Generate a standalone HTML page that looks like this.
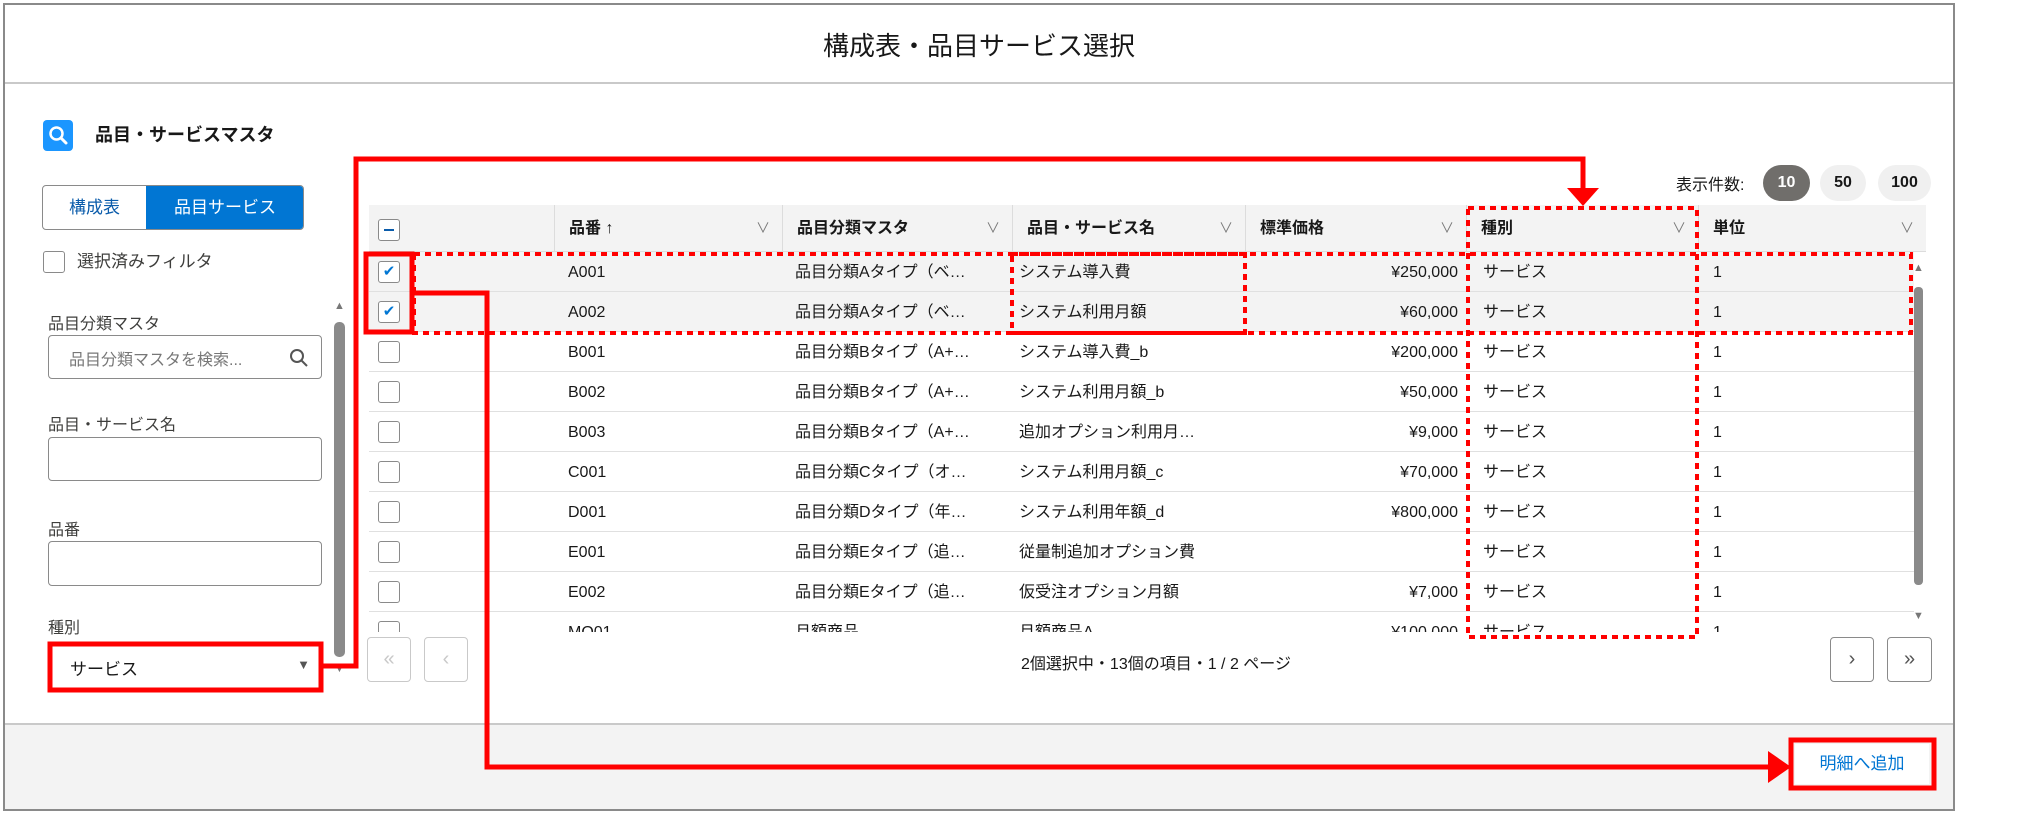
<!DOCTYPE html>
<html><head><meta charset="utf-8"><style>
*{box-sizing:border-box;margin:0;padding:0}
body{width:2027px;height:814px;background:#fff;font-family:"Liberation Sans","Noto Sans CJK JP",sans-serif;color:#181818;position:relative;overflow:hidden}
.a{position:absolute}
.frame{left:3px;top:3px;width:1952px;height:808px;border:2px solid #8a8a8a;background:#fff}
.title{left:3px;width:1952px;top:26px;text-align:center;font-size:26px}
.hline{left:5px;width:1948px;height:2px;background:#c9c9c9}
.footer{left:5px;top:723px;width:1948px;height:86px;background:#f3f3f3;border-top:2px solid #c9c9c9}
.lbl{font-size:16px;color:#3e3e3c}
.inp{border:1px solid #8a8a8a;border-radius:4px;background:#fff}
.th{top:205px;height:47px;font-size:16px;font-weight:bold;line-height:47px;padding-left:14px;border-left:1px solid #dcdcdc}
.chev{position:absolute;right:12px;top:0;color:#777;font-weight:normal;font-size:14px}
.row{position:absolute;left:0;width:1545px;height:40px;border-bottom:1px solid #e0e0e0;font-size:16px;line-height:42px}
.row span{position:absolute;white-space:nowrap}
.cb{position:absolute;width:22px;height:22px;border:1px solid #8a8a8a;border-radius:3px;background:#fff}
.pb{border:1px solid #c9c9c9;border-radius:4px;background:#fff;text-align:center;line-height:42px;font-size:20px;color:#c9c9c9}
.pb2{border-color:#8a8a8a;color:#555}
.pill{top:165px;height:36px;border-radius:18px;background:#f0f0f0;text-align:center;line-height:36px;font-size:16px;font-weight:bold}
</style></head><body>
<div class="a frame"></div>
<div class="a title">構成表・品目サービス選択</div>
<div class="a hline" style="top:82px"></div>
<div class="a footer"></div>

<div class="a" style="left:43px;top:120px;width:30px;height:31px;background:#1b96ff;border-radius:4px">
<svg width="30" height="31" viewBox="0 0 30 31"><circle cx="13.5" cy="13.5" r="6" fill="none" stroke="#fff" stroke-width="2.5"/><path d="M18 18 L23 23" stroke="#fff" stroke-width="3" stroke-linecap="round"/></svg></div>
<div class="a" style="left:95px;top:122px;font-size:18px;font-weight:bold;line-height:26px">品目・サービスマスタ</div>

<div class="a" style="left:42px;top:185px;width:262px;height:45px;border:1px solid #8a8a8a;border-radius:4px;overflow:hidden">
<div class="a" style="left:0;top:0;width:103px;height:43px;line-height:43px;text-align:center;color:#0b5cab;font-size:17px">構成表</div>
<div class="a" style="left:103px;top:0;width:158px;height:43px;line-height:43px;text-align:center;background:#0176d3;color:#fff;font-size:17px">品目サービス</div></div>
<div class="a" style="left:43px;top:251px;width:22px;height:22px;border:1px solid #8a8a8a;border-radius:3px"></div>
<div class="a" style="left:77px;top:249px;font-size:17px;line-height:26px;color:#3e3e3c">選択済みフィルタ</div>

<div class="a lbl" style="left:48px;top:310px">品目分類マスタ</div>
<div class="a inp" style="left:48px;top:335px;width:274px;height:44px"><span class="a" style="left:20px;top:10px;font-size:16px;color:#777">品目分類マスタを検索...</span>
<svg class="a" style="right:12px;top:12px" width="20" height="20"><circle cx="8" cy="8" r="6" fill="none" stroke="#555" stroke-width="2"/><path d="M12.5 12.5 L18 18" stroke="#555" stroke-width="2"/></svg></div>
<div class="a lbl" style="left:48px;top:411px">品目・サービス名</div>
<div class="a inp" style="left:48px;top:437px;width:274px;height:44px"></div>
<div class="a lbl" style="left:48px;top:516px">品番</div>
<div class="a inp" style="left:48px;top:541px;width:274px;height:45px"></div>
<div class="a lbl" style="left:48px;top:614px">種別</div>
<div class="a" style="left:52px;top:646px;width:268px;height:42px;background:#fff"><span class="a" style="left:18px;top:9px;font-size:17px">サービス</span><span class="a" style="right:10px;top:11px;font-size:13px;color:#555">▼</span></div>

<div class="a" style="left:334px;top:300px;font-size:11px;color:#777">▲</div>
<div class="a" style="left:334px;top:322px;width:11px;height:335px;background:#8a8a8a;border-radius:5px"></div>
<div class="a" style="left:334px;top:663px;font-size:11px;color:#777">▼</div>

<div class="a" style="left:1676px;top:171px;font-size:16px">表示件数:</div>
<div class="a pill" style="left:1763px;width:47px;background:#706e6b;color:#fff">10</div>
<div class="a pill" style="left:1820px;width:46px">50</div>
<div class="a pill" style="left:1878px;width:53px">100</div>

<div class="a" style="left:369px;top:205px;width:1557px;height:47px;background:#f3f3f3;border-bottom:1px solid #dcdcdc"></div>
<div class="cb" style="left:378px;top:219px"><div style="position:absolute;left:5px;top:9px;width:10px;height:2px;background:#0b5cab"></div></div>
<div class="a th" style="left:554px;width:228px">品番 ↑<span class="chev">∨</span></div>
<div class="a th" style="left:782px;width:230px">品目分類マスタ<span class="chev">∨</span></div>
<div class="a th" style="left:1012px;width:233px">品目・サービス名<span class="chev">∨</span></div>
<div class="a th" style="left:1245px;width:221px">標準価格<span class="chev">∨</span></div>
<div class="a th" style="left:1466px;width:232px">種別<span class="chev">∨</span></div>
<div class="a th" style="left:1698px;width:228px">単位<span class="chev">∨</span></div>

<div class="a" style="left:369px;top:252px;width:1545px;height:380px;overflow:hidden">
<div class="row" style="top:0;background:#f3f3f3"><div class="cb" style="left:9px;top:9px;color:#0176d3;font-size:15px;line-height:20px;text-align:center">✔</div><span style="left:199px">A001</span><span style="left:426px">品目分類Aタイプ（ベ…</span><span style="left:650px">システム導入費</span><span style="right:456px">¥250,000</span><span style="left:1114px">サービス</span><span style="left:1344px">1</span></div>
<div class="row" style="top:40px;background:#f3f3f3"><div class="cb" style="left:9px;top:9px;color:#0176d3;font-size:15px;line-height:20px;text-align:center">✔</div><span style="left:199px">A002</span><span style="left:426px">品目分類Aタイプ（ベ…</span><span style="left:650px">システム利用月額</span><span style="right:456px">¥60,000</span><span style="left:1114px">サービス</span><span style="left:1344px">1</span></div>
<div class="row" style="top:80px"><div class="cb" style="left:9px;top:9px"></div><span style="left:199px">B001</span><span style="left:426px">品目分類Bタイプ（A+…</span><span style="left:650px">システム導入費_b</span><span style="right:456px">¥200,000</span><span style="left:1114px">サービス</span><span style="left:1344px">1</span></div>
<div class="row" style="top:120px"><div class="cb" style="left:9px;top:9px"></div><span style="left:199px">B002</span><span style="left:426px">品目分類Bタイプ（A+…</span><span style="left:650px">システム利用月額_b</span><span style="right:456px">¥50,000</span><span style="left:1114px">サービス</span><span style="left:1344px">1</span></div>
<div class="row" style="top:160px"><div class="cb" style="left:9px;top:9px"></div><span style="left:199px">B003</span><span style="left:426px">品目分類Bタイプ（A+…</span><span style="left:650px">追加オプション利用月…</span><span style="right:456px">¥9,000</span><span style="left:1114px">サービス</span><span style="left:1344px">1</span></div>
<div class="row" style="top:200px"><div class="cb" style="left:9px;top:9px"></div><span style="left:199px">C001</span><span style="left:426px">品目分類Cタイプ（オ…</span><span style="left:650px">システム利用月額_c</span><span style="right:456px">¥70,000</span><span style="left:1114px">サービス</span><span style="left:1344px">1</span></div>
<div class="row" style="top:240px"><div class="cb" style="left:9px;top:9px"></div><span style="left:199px">D001</span><span style="left:426px">品目分類Dタイプ（年…</span><span style="left:650px">システム利用年額_d</span><span style="right:456px">¥800,000</span><span style="left:1114px">サービス</span><span style="left:1344px">1</span></div>
<div class="row" style="top:280px"><div class="cb" style="left:9px;top:9px"></div><span style="left:199px">E001</span><span style="left:426px">品目分類Eタイプ（追…</span><span style="left:650px">従量制追加オプション費</span><span style="left:1114px">サービス</span><span style="left:1344px">1</span></div>
<div class="row" style="top:320px"><div class="cb" style="left:9px;top:9px"></div><span style="left:199px">E002</span><span style="left:426px">品目分類Eタイプ（追…</span><span style="left:650px">仮受注オプション月額</span><span style="right:456px">¥7,000</span><span style="left:1114px">サービス</span><span style="left:1344px">1</span></div>
<div class="row" style="top:360px"><div class="cb" style="left:9px;top:9px"></div><span style="left:199px">MO01</span><span style="left:426px">月額商品</span><span style="left:650px">月額商品A</span><span style="right:456px">¥100,000</span><span style="left:1114px">サービス</span><span style="left:1344px">1</span></div>
</div>
<div class="a" style="left:1913px;top:262px;font-size:11px;color:#777">▲</div>
<div class="a" style="left:1914px;top:287px;width:9px;height:298px;background:#8a8a8a;border-radius:4px"></div>
<div class="a" style="left:1913px;top:610px;font-size:11px;color:#777">▼</div>

<div class="a pb" style="left:367px;top:637px;width:44px;height:45px">«</div>
<div class="a pb" style="left:424px;top:637px;width:44px;height:45px">‹</div>
<div class="a pb pb2" style="left:1830px;top:637px;width:44px;height:45px">›</div>
<div class="a pb pb2" style="left:1887px;top:637px;width:45px;height:45px">»</div>
<div class="a" style="left:900px;width:512px;top:650px;text-align:center;font-size:16px">2個選択中・13個の項目・1 / 2 ページ</div>

<div class="a" style="left:1795px;top:744px;width:134px;height:40px;background:#fff;text-align:center;line-height:40px;color:#0176d3;font-size:17px">明細へ追加</div>

<svg class="a" style="left:0;top:0" width="2027" height="814">
<g fill="none" stroke="#f00" stroke-width="5">
<path d="M322 666 H356 V159 H1583 V190"/>
<rect x="366" y="254" width="46" height="78"/>
<path d="M412 293 H487 V767 H1772"/>
<rect x="50" y="644" width="271" height="46"/>
<rect x="1791" y="740" width="143" height="48"/>
</g>
<polygon points="1567,188 1599,188 1583,206" fill="#f00"/>
<polygon points="1768,751 1768,783 1791,767" fill="#f00"/>
<g fill="none" stroke="#f00" stroke-width="4" stroke-dasharray="6 5">
<rect x="414" y="254" width="1497" height="79"/>
<rect x="1012" y="254" width="233" height="79"/>
<rect x="1468" y="208" width="229" height="429"/>
</g>
</svg>
</body></html>
